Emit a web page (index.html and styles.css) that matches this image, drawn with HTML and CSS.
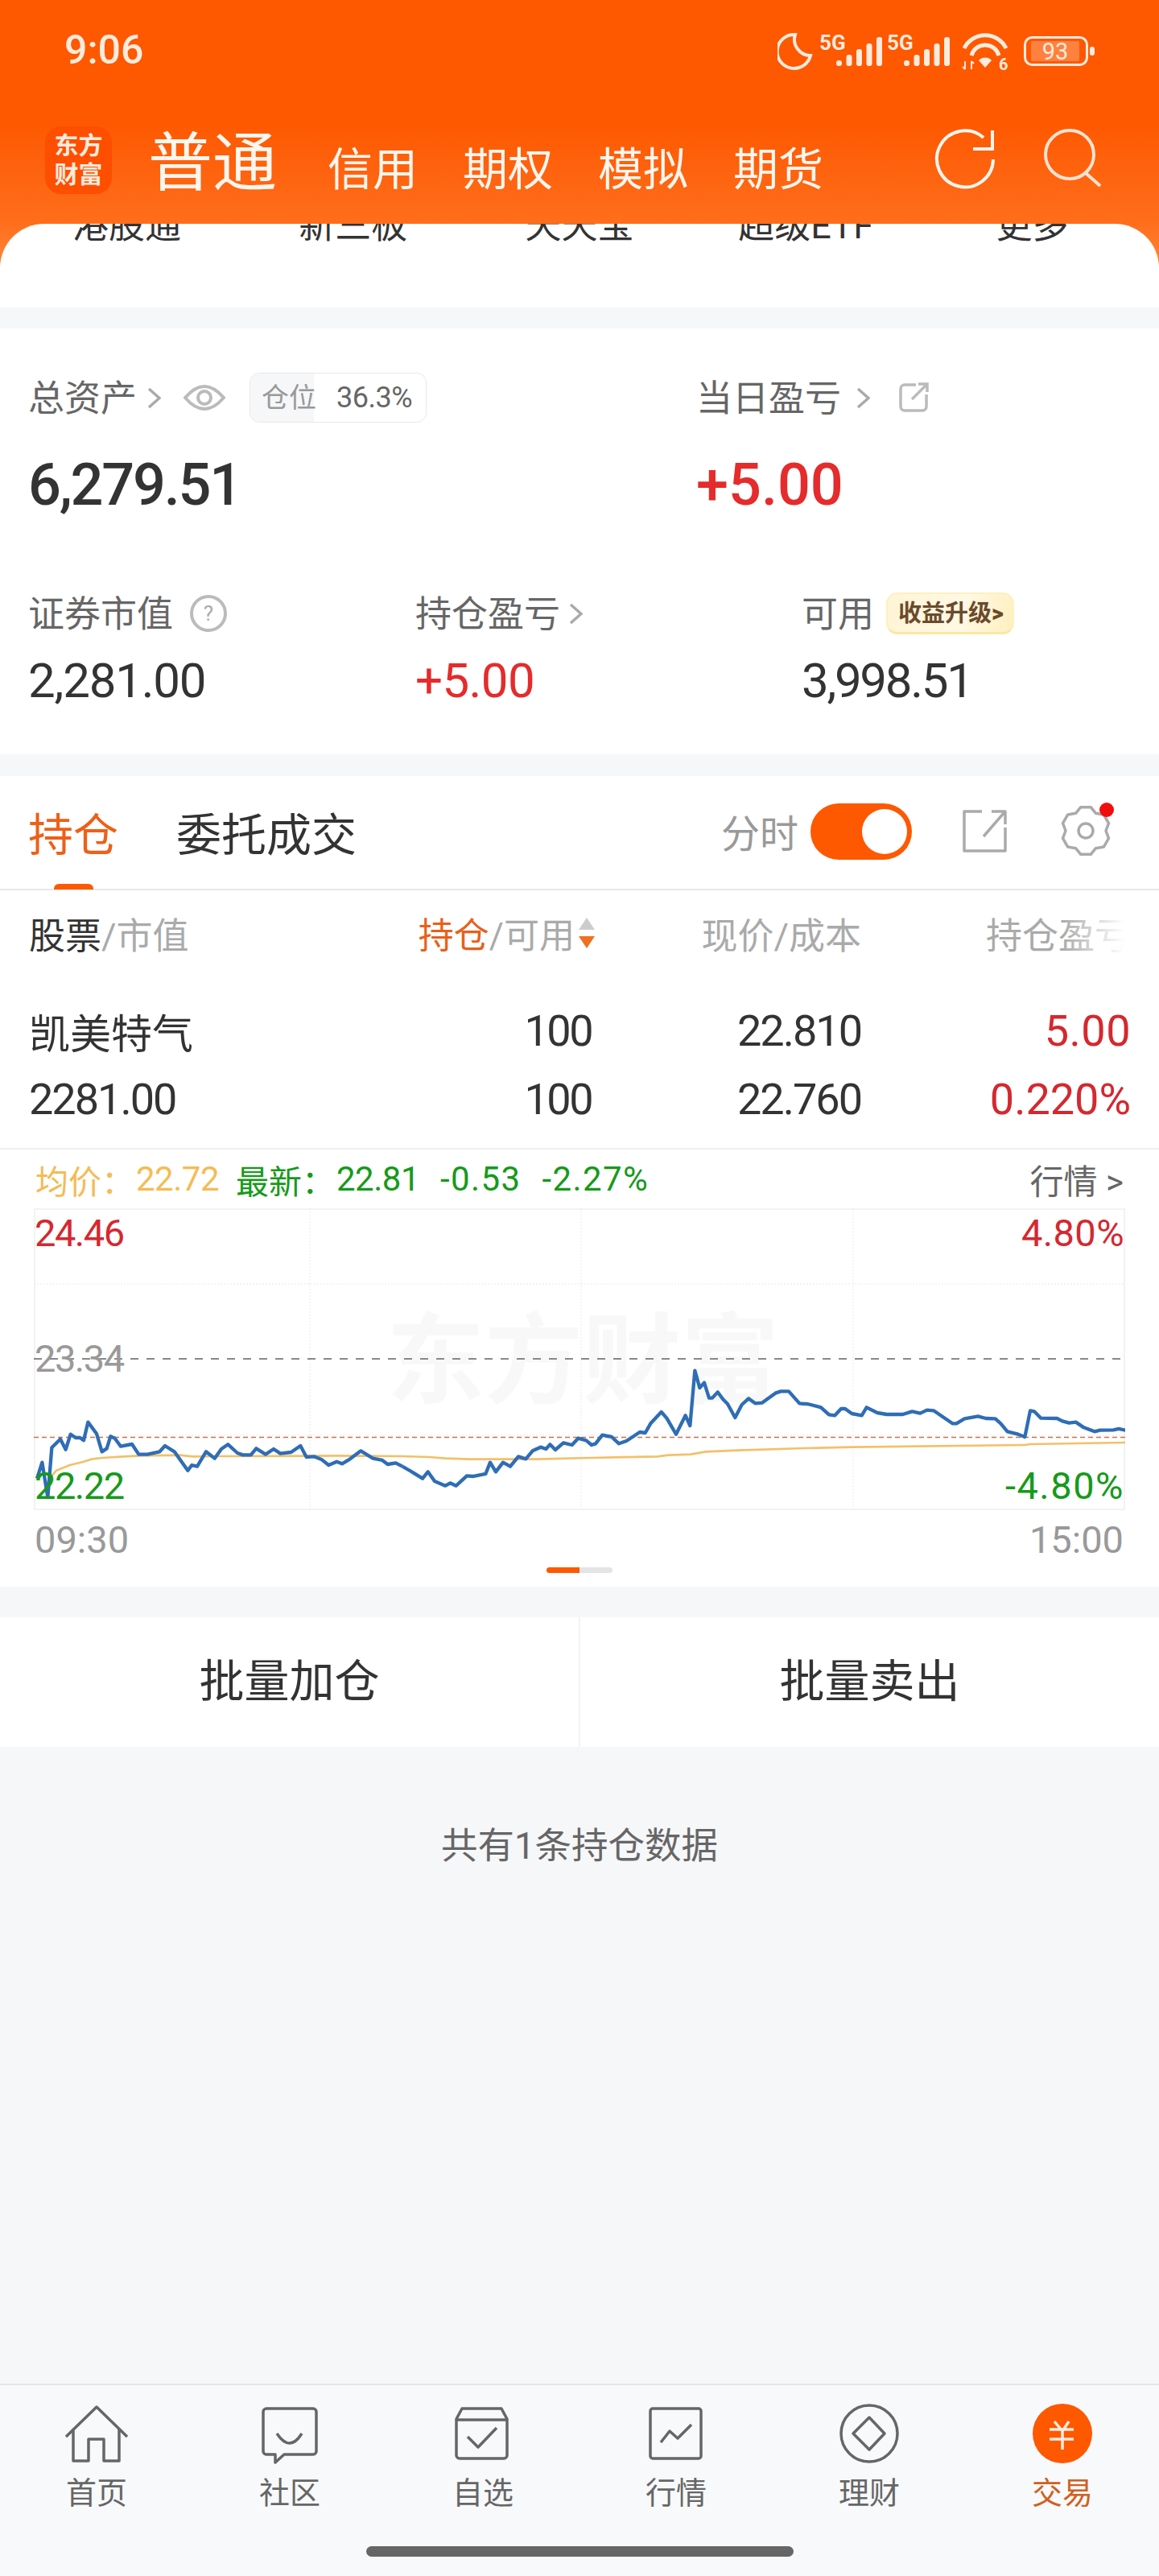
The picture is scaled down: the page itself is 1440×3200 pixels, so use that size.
FILE: index.html
```html
<!DOCTYPE html>
<html lang="zh-CN">
<head>
  <meta charset="UTF-8" />
  <title>交易</title>
  <link rel="stylesheet" href="styles.css">
</head>
<body>
<div class="page">

  <!-- HEADER -->
  <div class="top-area">
    <div class="status-bar">
      <span class="clock">9:06</span>
      <svg class="status-icons" width="394" height="62" viewBox="0 -8 394 62">
        <path class="st-line" d="M22 2A21 21 0 1 0 41 28A20 20 0 0 1 22 2Z"/>
        <text class="st-net" x="52" y="21">5G</text>
        <rect class="st-fill" x="73" y="34" width="7" height="7" rx="3"/>
        <rect class="st-fill" x="85.5" y="27" width="7" height="14" rx="3"/>
        <rect class="st-fill" x="98" y="20" width="7" height="21" rx="3"/>
        <rect class="st-fill" x="110.5" y="13" width="7" height="28" rx="3"/>
        <rect class="st-fill" x="123" y="5" width="7" height="36" rx="3"/>
        <text class="st-net" x="136" y="21">5G</text>
        <rect class="st-fill" x="157" y="34" width="7" height="7" rx="3"/>
        <rect class="st-fill" x="169.5" y="27" width="7" height="14" rx="3"/>
        <rect class="st-fill" x="182" y="20" width="7" height="21" rx="3"/>
        <rect class="st-fill" x="194.5" y="13" width="7" height="28" rx="3"/>
        <rect class="st-fill" x="207" y="5" width="7" height="36" rx="3"/>
        <path class="st-wifi" d="M232 19A29 29 0 0 1 284 19M241 28A17.600 17.600 0 0 1 275 28"/>
        <path class="st-fill" d="M250 34L258 43L266 34A11 11 0 0 0 250 34Z"/>
        <path class="st-thin" d="M233 35V45M230 42L233 45M241 35V45M241 35L244 38"/>
        <text class="st-six" x="275" y="46">6</text>
        <rect class="st-batt" x="307.500" y="5.500" width="77" height="34" rx="9"/>
        <rect class="st-level" x="315" y="10" width="60" height="25" rx="2"/>
        <text class="st-pct" x="345" y="33">93</text>
        <rect class="st-fill" x="388" y="17" width="6" height="11" rx="3"/>
      </svg>
    </div>
    <div class="app-row">
      <div class="logo">东方<br>财富</div>
      <div class="acct-tabs">
        <span class="acct-on">普通</span>
        <span>信用</span>
        <span>期权</span>
        <span>模拟</span>
        <span>期货</span>
      </div>
      <div class="app-actions">
        <svg width="76" height="76" viewBox="0 0 76 76" class="app-icon">
          <path d="M62 12A35 35 0 1 0 74 39"/>
          <path d="M73 3V26H49"/>
        </svg>
        <svg width="74" height="74" viewBox="0 0 74 74" class="app-icon app-icon-soft">
          <circle cx="33" cy="33" r="30"/>
          <path d="M53 56L71 72"/>
        </svg>
      </div>
    </div>
    <div class="nav-strip">
      <div class="nav-items">
        <span>港股通</span>
        <span>新三板</span>
        <span>天天宝</span>
        <span>超级ETF</span>
        <span>更多</span>
      </div>
    </div>
  </div>

  <!-- ASSETS -->
  <div class="card assets">
    <div class="asset-top">
      <div>
        <div class="label-line label-tall">
          <span class="label-text">总资产</span>
          <svg class="chev" width="17" height="27" viewBox="0 0 17 27"><path d="M2 2L15 13.500L2 25"/></svg>
          <svg class="eye" width="52" height="36" viewBox="0 0 52 36"><path d="M2 18Q26 -10 50 18Q26 46 2 18Z"/><circle cx="26" cy="18" r="8"/></svg>
          <div class="ratio">
            <div class="ratio-fill" style="width:36.3%"></div>
            <span class="ratio-name">仓位</span>
            <span class="ratio-val">36.3%</span>
          </div>
        </div>
        <div class="big-num tight">6,279.51</div>
      </div>
      <div>
        <div class="label-line label-tall">
          <span class="label-text">当日盈亏</span>
          <svg class="chev chev-day" width="17" height="27" viewBox="0 0 17 27"><path d="M2 2L15 13.500L2 25"/></svg>
          <svg class="ext" width="38" height="38" viewBox="0 0 38 38"><path d="M22 3H8A5 5 0 0 0 3 8V30A5 5 0 0 0 8 35H30A5 5 0 0 0 35 30V15"/><path d="M17 21L36 2M25 2H36V12"/></svg>
        </div>
        <div class="big-num red">+5.00</div>
      </div>
    </div>
    <div class="asset-bottom">
      <div>
        <div class="label-line">
          <span class="label-text">证券市值</span>
          <svg class="help" width="46" height="46" viewBox="0 0 46 46"><circle cx="23" cy="23" r="21"/><text x="23" y="32">?</text></svg>
        </div>
        <div class="mid-num tight-mid">2,281.00</div>
      </div>
      <div>
        <div class="label-line">
          <span class="label-text">持仓盈亏</span>
          <svg class="chev chev-near" width="17" height="27" viewBox="0 0 17 27"><path d="M2 2L15 13.500L2 25"/></svg>
        </div>
        <div class="mid-num red slight">+5.00</div>
      </div>
      <div>
        <div class="label-line">
          <span class="label-text">可用</span>
          <span class="upgrade">收益升级<b>&gt;</b></span>
        </div>
        <div class="mid-num tighter">3,998.51</div>
      </div>
    </div>
  </div>

  <!-- POSITIONS -->
  <div class="card positions">
    <div class="pos-tabs">
      <span class="pos-tab pos-tab-on">持仓</span>
      <span class="pos-tab">委托成交</span>
      <span class="mini-label">分时</span>
      <div class="toggle"><div class="toggle-knob"></div></div>
      <svg class="pos-icon pos-share" width="55" height="53" viewBox="0 0 55 53"><path d="M24 2H2V51H53V22"/><path d="M26 33L52 3M36 2H53V18"/></svg>
      <div class="gear-wrap">
        <svg class="pos-icon" width="62" height="62" viewBox="0 0 62 62">
          <polygon points="24.800,1.700 37.200,1.700 43.500,9.350 53.300,10.900 59.500,21.700 56,31 59.500,40.300 53.300,51.100 43.500,52.650 37.200,60.300 24.800,60.300 18.500,52.650 8.700,51.100 2.500,40.300 6,31 2.500,21.700 8.700,10.900 18.500,9.350"/>
          <circle cx="31" cy="31" r="9"/>
        </svg>
        <span class="red-dot"></span>
      </div>
    </div>

    <div class="pos-grid pos-head">
      <div><span class="ink">股票</span>/市值</div>
      <div class="cell-r cell-sort"><span class="accent">持仓</span>/可用<svg class="sort" width="20" height="38" viewBox="0 0 20 38"><path class="sort-up" d="M10 0L20 15H0Z"/><path class="sort-down" d="M10 38L0 23H20Z"/></svg></div>
      <div class="cell-r">现价/成本</div>
      <div class="cell-r">持仓盈亏</div>
      <div class="head-fade"></div>
    </div>

    <div class="pos-body">
      <div class="pos-grid pos-row">
        <div class="stock-name">凯美特气</div>
        <div class="cell-r t3">100</div>
        <div class="cell-r t2">22.810</div>
        <div class="cell-r t1 red-soft">5.00</div>
      </div>
      <div class="pos-grid pos-row">
        <div class="t2">2281.00</div>
        <div class="cell-r t3">100</div>
        <div class="cell-r t2">22.760</div>
        <div class="cell-r red-soft">0.220%</div>
      </div>
    </div>

    <div class="quote-line">
      <span class="avg">均价：</span><span class="avg qv">22.72</span>
      <span class="up-label">最新：</span><span class="grn qv">22.81</span>
      <span class="grn qv qgap">-0.53</span>
      <span class="grn qv qgap">-2.27%</span>
      <span class="quote-more">行情 &gt;</span>
    </div>

    <div class="chart">
      <div class="watermark">东方财富</div>
      <svg class="chart-svg" width="1356" height="375" viewBox="42 1501 1356 375">
        <path class="grid-dot" d="M42 1595H1398M42 1783H1398M385 1501V1876M722 1501V1876M1060 1501V1876"/>
        <path class="mid-dash" d="M42 1688H1392"/>
        <path class="pre-dash" d="M42 1785.500H1398"/>
        <g transform="translate(20 1640) scale(.33333)">
          <polyline class="avg-line" points="125,590 150,560 200,540 250,528 280,518 320,513 400,508 460,505 610,503 660,508 750,507 1100,506 1200,505 1290,506 1440,507"/>
          <polyline class="px-line" points="78,590 97,530 118,660 133,475 165,443 185,482 203,425 222,438 238,438 252,448 268,380 300,423 320,490 338,478 352,433 368,440 390,470 432,462 457,500 490,500 535,490 555,468 590,490 615,525 640,560 655,540 675,545 708,490 740,515 765,480 790,463 825,495 845,502 875,502 895,478 930,500 960,480 985,497 1025,492 1060,468 1082,510 1110,508 1140,520 1165,540 1195,527 1215,535 1245,517 1285,487 1330,515 1365,522 1385,537 1415,532 1440,545"/>
        </g>
        <g transform="translate(500 1640) scale(.33333)">
          <polyline class="avg-line" points="0,507 100,510 160,515 250,518 400,518 500,518 700,513 950,508 990,503 1075,500 1130,490 1250,485 1500,477"/>
          <polyline class="px-line" points="0,545 35,565 75,590 95,565 120,600 160,617 178,607 200,617 240,580 265,582 310,573 327,530 348,565 375,530 402,545 432,508 460,517 485,487 515,473 535,480 550,463 570,483 600,457 632,465 655,440 685,448 705,465 720,460 745,428 780,435 807,460 835,450 885,417 905,420 925,385 965,342 985,365 1020,425 1055,355 1072,393 1090,188 1108,252 1125,233 1143,290 1155,290 1175,268 1195,295 1212,312 1240,363 1265,315 1290,292 1315,310 1340,308 1390,272 1410,265 1440,265 1480,310 1500,312"/>
        </g>
        <g transform="translate(950 1640) scale(.33333)">
          <polyline class="avg-line" points="150,477 330,473 970,465 990,462 1345,456"/>
          <polyline class="px-line" points="150,312 160,312 210,325 240,352 262,355 285,330 300,330 325,348 362,355 380,325 420,345 455,351 515,351 550,340 580,347 605,335 630,337 700,385 715,385 745,367 795,358 825,366 860,367 880,385 905,415 945,425 970,435 990,337 1005,340 1030,365 1090,366 1110,376 1135,383 1160,380 1190,400 1230,415 1250,410 1300,409 1320,405 1345,410"/>
        </g>
      </svg>
      <span class="ax ax-tl red-soft">24.46</span>
      <span class="ax ax-ml">23.34</span>
      <span class="ax ax-bl grn">22.22</span>
      <span class="ax ax-pct ax-tr red-soft">4.80%</span>
      <span class="ax ax-pct ax-br grn">-4.80%</span>
    </div>
    <div class="time-axis">
      <span>09:30</span>
      <span>15:00</span>
    </div>
    <div class="pager"><span class="pager-on"></span><span class="pager-off"></span></div>
  </div>

  <!-- BATCH BUTTONS -->
  <div class="batch">
    <div class="batch-btn">批量加仓</div>
    <div class="batch-btn">批量卖出</div>
  </div>

  <div class="empty-note">共有1条持仓数据</div>

  <!-- BOTTOM TABS -->
  <div class="tabbar">
    <div class="tabs">
      <div class="tab">
        <svg width="80" height="80" viewBox="0 0 80 80"><path d="M2 42L40 5L78 42"/><path d="M11 32V72H30V45H49V72H68V32"/></svg>
        <span>首页</span>
      </div>
      <div class="tab">
        <svg width="80" height="80" viewBox="0 0 80 80"><path d="M11 7H69A4 4 0 0 1 73 11V60A4 4 0 0 1 69 64H33L22 74V64H11A4 4 0 0 1 7 60V11A4 4 0 0 1 11 7Z"/><path d="M24 38Q40 62 55 38"/></svg>
        <span>社区</span>
      </div>
      <div class="tab">
        <svg width="80" height="80" viewBox="0 0 80 80"><path d="M14 7H63L70 20V65A4 4 0 0 1 66 69H11A4 4 0 0 1 7 65V20Z"/><path d="M7 21H70"/><path d="M21 42L34 55L57 31"/></svg>
        <span>自选</span>
      </div>
      <div class="tab">
        <svg width="80" height="80" viewBox="0 0 80 80"><rect x="8" y="7" width="63" height="62" rx="3"/><path d="M21 49L32 35L42 44L59 27"/></svg>
        <span>行情</span>
      </div>
      <div class="tab">
        <svg width="80" height="80" viewBox="0 0 80 80"><circle cx="40" cy="38" r="35"/><path d="M40 18L59 38L40 58L20 38Z"/></svg>
        <span>理财</span>
      </div>
      <div class="tab tab-on">
        <svg width="80" height="80" viewBox="0 0 80 80"><circle class="tab-disc" cx="40" cy="38" r="37"/><path class="tab-yuan" d="M30 23L40 35L48 23M24 33H54M24 45H54M40 35V58"/></svg>
        <span>交易</span>
      </div>
    </div>
    <div class="home-bar"></div>
  </div>

</div>
</body>
</html>
```
FILE: styles.css
```css
* {
  box-sizing: border-box;
}
body {
  margin: 0;
  background-color: #f6f7f9;
  color: #333;
  font-family: Roboto, "Noto Sans CJK SC", sans-serif;
}
.page {
  display: flex;
  flex-direction: column;
  width: 1440px;
  min-height: 3200px;
}

/* header */
.top-area {
  height: 382px;
  background: linear-gradient(#fe5801 0, #fe5801 150px, #ff6e1c 278px, #ff8b3c 340px);
}
.status-bar {
  display: flex;
  align-items: center;
  height: 124px;
  padding: 0 80px;
  color: #fdebdd;
}
.clock {
  font-size: 50px;
  font-weight: 500;
}
.status-icons {
  margin-left: auto;
  margin-top: 4px;
}
.st-line, .st-wifi, .st-thin, .st-batt {
  fill: none;
  stroke: #fdebdd;
}
.st-line { stroke-width: 4; }
.st-wifi { stroke-width: 5; }
.st-thin { stroke-width: 2; }
.st-batt { stroke-width: 3; }
.st-fill { fill: #fdebdd; }
.st-level { fill: #ff8140; }
.st-net, .st-six {
  fill: #fdebdd;
  font-weight: 700;
}
.st-net { font-size: 26px; }
.st-six { font-size: 20px; }
.st-pct {
  fill: #fdebdd;
  font-size: 29px;
  text-anchor: middle;
}
.app-row {
  display: flex;
  height: 154px;
  padding: 33px 70px 0 56px;
}
.logo {
  width: 83px;
  height: 84px;
  padding-top: 6px;
  border-radius: 20px;
  background-color: #fe4e00;
  color: #fdebdd;
  font-size: 30px;
  font-weight: 700;
  line-height: 36px;
  text-align: center;
}
.acct-tabs {
  display: flex;
  align-items: baseline;
  gap: 56px;
  height: 84px;
  margin-top: 6px;
  margin-left: 45px;
  color: #fff6ef;
  font-size: 56px;
  line-height: 80px;
}
.acct-on {
  margin-right: 7px;
  font-size: 80px;
}
.app-actions {
  display: flex;
  gap: 60px;
  margin-left: auto;
  margin-top: -27px;
  height: 80px;
  padding-top: 29px;
}
.app-icon {
  fill: none;
  stroke: #fff6ef;
  stroke-width: 4;
}
.app-icon-soft {
  stroke: #fde3d3;
}
.nav-strip {
  height: 104px;
  overflow: hidden;
  border-radius: 55px 55px 0 0;
  background-color: #fff;
}
.nav-items {
  display: grid;
  grid-template-columns: repeat(5, 1fr);
  margin-top: -20px;
  padding: 0 17px;
  font-size: 45px;
  line-height: 46px;
  text-align: center;
}

/* cards */
.card {
  background-color: #fff;
}
.assets {
  height: 529px;
  margin-top: 26px;
  padding: 55px 35px 0;
}
.asset-top {
  display: grid;
  grid-template-columns: 830px 1fr;
}
.asset-bottom {
  display: grid;
  grid-template-columns: 481px 480px 1fr;
  margin-top: 97px;
}
.label-line {
  display: flex;
  align-items: center;
  height: 52px;
  color: #666;
  font-size: 45px;
  line-height: 52px;
}
.label-text {
  padding-top: 4px;
}
.label-tall {
  height: 62px;
}
.chev {
  margin-left: 13px;
  fill: none;
  stroke: #aaa;
  stroke-width: 3.5;
}
.chev-day {
  margin-left: 19px;
}
.chev-near {
  margin-left: 11px;
}
.eye {
  margin-left: 28px;
  fill: none;
  stroke: #bbb;
  stroke-width: 4;
}
.ext {
  margin-left: 35px;
  fill: none;
  stroke: #bbb;
  stroke-width: 3.5;
}
.help {
  margin-left: 21px;
  fill: none;
  stroke: #bbb;
  stroke-width: 4;
}
.help text {
  fill: #aaa;
  stroke: none;
  font-size: 26px;
  text-anchor: middle;
}
.ratio {
  position: relative;
  display: flex;
  align-items: center;
  width: 220px;
  height: 62px;
  margin-left: 30px;
  overflow: hidden;
  border: 1px solid #e8e8e8;
  border-radius: 12px;
}
.ratio-fill {
  position: absolute;
  top: 0;
  bottom: 0;
  left: 0;
  background-color: #f6f7f9;
}
.ratio-name, .ratio-val {
  position: relative;
}
.ratio-name {
  margin-left: 14px;
  color: #999;
  font-size: 34px;
}
.ratio-val {
  margin-left: 25px;
  color: #666;
  font-size: 36px;
  letter-spacing: -.5px;
}
.big-num {
  margin-top: 42px;
  font-size: 72px;
  font-weight: 500;
  line-height: 72px;
}
.mid-num {
  margin-top: 28px;
  font-size: 60px;
  line-height: 60px;
}
.tight { letter-spacing: -2.2px; }
.tight-mid { letter-spacing: -1.2px; }
.tighter { letter-spacing: -2.3px; }
.slight { letter-spacing: -.6px; }
.red { color: #e52b2b; }
.red-soft { color: #d5282f; }
.grn { color: #169a1a; }
.upgrade {
  display: flex;
  align-items: center;
  height: 52px;
  margin-left: 15px;
  padding: 0 11px 0 13px;
  border: 2px solid #fdf0c0;
  border-bottom: 3px solid #fbe79f;
  border-radius: 14px;
  background: linear-gradient(100deg, #fff4d6, #fff8e4 60%, #fff0c0);
  color: #6b4a2b;
  font-size: 29px;
  font-weight: 700;
}

/* positions */
.positions {
  height: 1007px;
  margin-top: 27px;
}
.pos-tabs {
  position: relative;
  display: flex;
  align-items: center;
  height: 142px;
  padding: 0 60px 4px 35px;
  border-bottom: 2px solid #e8e8e8;
}
.pos-tabs::after {
  content: "";
  position: absolute;
  bottom: -1px;
  left: 67px;
  width: 49px;
  height: 7px;
  border-radius: 6px 6px 0 0;
  background-color: #fe5801;
}
.pos-tab {
  margin-right: 72px;
  font-size: 56px;
}
.pos-tab-on {
  color: #ee5f18;
}
.mini-label {
  margin-left: auto;
  color: #999;
  font-size: 48px;
}
.toggle {
  width: 126px;
  height: 70px;
  margin-top: 2px;
  margin-left: 15px;
  padding: 7px 6px 7px 64px;
  border-radius: 35px;
  background-color: #fe5801;
}
.toggle-knob {
  width: 56px;
  height: 56px;
  border-radius: 50%;
  background-color: #fff;
}
.pos-icon {
  fill: none;
  stroke: #aaa;
  stroke-width: 3.5;
  stroke-linejoin: round;
}
.pos-share {
  margin-left: 63px;
}
.gear-wrap {
  position: relative;
  height: 62px;
  margin-left: 67px;
}
.red-dot {
  position: absolute;
  top: -4px;
  right: -4px;
  width: 18px;
  height: 18px;
  border-radius: 50%;
  background-color: #f20d0d;
}
.pos-grid {
  display: grid;
  grid-template-columns: 1fr 300px 335px 335px;
  padding: 0 35px 0 36px;
}
.pos-head {
  position: relative;
  align-items: center;
  height: 110px;
  padding-bottom: 4px;
  color: #aaa;
  font-size: 45px;
}
.head-fade {
  position: absolute;
  top: 20px;
  right: 30px;
  width: 90px;
  height: 70px;
  background: linear-gradient(90deg, rgba(255, 255, 255, 0), #fff 85%);
}
.cell-r {
  display: flex;
  justify-content: flex-end;
  align-items: center;
}
.cell-sort {
  font-size: 44px;
}
.ink { color: #333; }
.accent { color: #e8601a; }
.sort {
  margin: 0 -4px 0 5px;
}
.sort-up { fill: #ccc; }
.sort-down { fill: #f0701f; }
.pos-body {
  padding: 22px 0 18px;
  border-bottom: 2px solid #eee;
}
.pos-row {
  align-items: center;
  height: 85px;
  font-size: 54px;
}
.stock-name {
  font-size: 51px;
}
.t1 { letter-spacing: .5px; }
.t2 { letter-spacing: -2px; }
.t3 { letter-spacing: -2.5px; }

/* chart */
.quote-line {
  display: flex;
  align-items: center;
  height: 73px;
  padding: 0 44px;
  font-size: 41px;
}
.avg { color: #f5bb55; }
.up-label {
  margin-left: 21px;
  color: #169a1a;
}
.qv {
  margin-left: 2px;
  font-size: 42px;
  letter-spacing: -.5px;
}
.qgap {
  margin-left: 26px;
  letter-spacing: 1.4px;
}
.quote-more {
  margin-left: auto;
  color: #666;
  font-size: 42px;
}
.chart {
  position: relative;
  width: 1356px;
  height: 375px;
  margin-left: 42px;
  overflow: hidden;
  box-shadow: inset 0 0 0 2px #f2f2f2;
}
.chart-svg {
  position: absolute;
  top: 0;
  left: 0;
}
.watermark {
  position: absolute;
  top: 116px;
  left: 438px;
  color: #f8f8f8;
  font-size: 122px;
  font-weight: 700;
  line-height: 150px;
  white-space: nowrap;
}
.grid-dot {
  fill: none;
  stroke: #e9e9e9;
  stroke-width: 1;
  stroke-dasharray: 2 2;
}
.mid-dash {
  fill: none;
  stroke: #888;
  stroke-width: 2;
  stroke-dasharray: 10 10;
}
.pre-dash {
  fill: none;
  stroke: #c8744a;
  stroke-width: 1.5;
  stroke-dasharray: 6 4;
}
.px-line, .avg-line {
  fill: none;
  stroke-linejoin: round;
}
.px-line {
  stroke: #2f6db5;
  stroke-width: 13;
}
.avg-line {
  stroke: #f3c069;
  stroke-width: 8;
}
.ax {
  position: absolute;
  font-size: 47px;
  line-height: 47px;
  letter-spacing: -1.5px;
}
.ax-pct {
  letter-spacing: .4px;
}
.ax-tl { top: 7px; left: 1px; }
.ax-ml { top: 163px; left: 1px; color: #999; }
.ax-bl { top: 321px; left: 1px; }
.ax-tr { top: 7px; right: 1px; }
.ax-br { top: 321px; right: 1px; letter-spacing: 1.5px; }
.time-axis {
  display: flex;
  justify-content: space-between;
  height: 71px;
  padding: 14px 44px 0 43px;
  color: #999;
  font-size: 47px;
  line-height: 46px;
}
.pager {
  display: flex;
  justify-content: center;
}
.pager-on, .pager-off {
  width: 41px;
  height: 7px;
}
.pager-on {
  border-radius: 4px 0 0 4px;
  background-color: #fe5801;
}
.pager-off {
  border-radius: 0 4px 4px 0;
  background-color: #e4e4e4;
}

/* batch buttons */
.batch {
  display: flex;
  height: 161px;
  margin-top: 38px;
  background-color: #fff;
}
.batch-btn {
  flex: 1;
  font-size: 56px;
  line-height: 161px;
  text-align: center;
}
.batch-btn + .batch-btn {
  border-left: 2px solid #f3f3f3;
}
.empty-note {
  flex: 1;
  padding-top: 91px;
  color: #666;
  font-size: 45.5px;
  line-height: 66px;
  text-align: center;
}

/* bottom tabs */
.tabbar {
  height: 239px;
  border-top: 2px solid #e5e5e7;
  background-color: #f8f9fb;
}
.tabs {
  display: flex;
  height: 200px;
  padding-top: 22px;
}
.tab {
  display: flex;
  flex-direction: column;
  align-items: center;
  flex: 1;
  color: #666;
  font-size: 38px;
  line-height: 44px;
}
.tab svg {
  margin-bottom: 10px;
  fill: none;
  stroke: #666;
  stroke-width: 3.5;
  stroke-linejoin: round;
}
.tab-on {
  color: #d0601f;
}
.tab svg .tab-disc {
  fill: #fe5801;
  stroke: none;
}
.tab svg .tab-yuan {
  stroke: #fdebdd;
}
.home-bar {
  width: 531px;
  height: 13px;
  margin: 0 auto;
  border-radius: 7px;
  background-color: #666;
}
```
